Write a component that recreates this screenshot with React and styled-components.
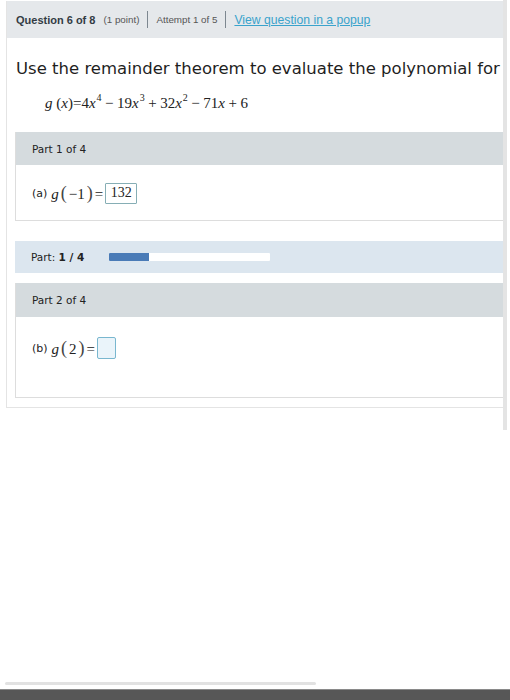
import React from 'react';
import styled, { createGlobalStyle } from 'styled-components';

const GlobalStyle = createGlobalStyle`
    html, body {
        margin: 0;
        padding: 0;
        background: #fff;
    }
`;

const Page = styled.div`
    width: 510px;
    height: 700px;
    display: flex;
    flex-direction: column;
    overflow: hidden;
    font-family: 'DejaVu Sans', Verdana, sans-serif;
    color: #222;
`;

const Main = styled.div`
    flex: 1;
    min-height: 0;
    display: flex;
`;

const Scroller = styled.div`
    flex: 1;
    min-width: 0;
    overflow: hidden;
    display: flex;
    flex-direction: column;
    justify-content: space-between;
    padding-top: 1px;
`;

const VTrack = styled.div`
    width: 4px;
    margin-right: 3px;
`;

const VThumb = styled.div`
    height: 430px;
    background: #e4e4e4;
`;

const HThumb = styled.div`
    width: 311px;
    height: 3px;
    margin: 0 0 4px 5px;
    border-radius: 2px;
    background: #e2e2e2;
`;

const Taskbar = styled.div`
    height: 10px;
    background: #575757;
    border-top: 1px solid #8a8a8a;
`;

const Card = styled.div`
    margin-left: 6px;
    border: 1px solid #e4e4e4;
    border-right: none;
    border-top: none;
`;

const Header = styled.div`
    height: 37px;
    background: #e5e8eb;
    display: flex;
    align-items: center;
    padding-left: 9px;
    font-family: 'Liberation Sans', Arial, sans-serif;
    color: #333c44;
    white-space: nowrap;
`;

const QTitle = styled.span`
    font-size: 11px;
    font-weight: bold;
`;

const Small = styled.span`
    font-size: 9.8px;
    color: #555;
    margin-left: ${(p) => p.$gap || 0}px;
`;

const Divider = styled.span`
    width: 1px;
    height: 17px;
    background: #7d8790;
    margin: 0 8px;
`;

const PopupLink = styled.a`
    font-size: 12.2px;
    color: #3aa3cc;
    text-decoration: underline;
    cursor: pointer;
`;

const Body = styled.div`
    padding: 0 0 9px 9px;
`;

const QuestionText = styled.p`
    margin: 21px 0 0;
    font-size: 16.5px;
    line-height: 20px;
    white-space: nowrap;
    color: #1f1f1f;
`;

const Formula = styled.div`
    margin: 14px 0 0 29px;
    line-height: 20px;
`;

const MathText = styled.span`
    font-family: 'Liberation Serif', 'Times New Roman', serif;
    font-size: ${(p) => p.$size || 14}px;
    color: #222;
    white-space: nowrap;
`;

const Var = styled.i`
    font-style: italic;
`;

const Sup = styled.sup`
    font-size: 10px;
    vertical-align: 7px;
    line-height: 0;
    margin-left: 1px;
`;

const Op = styled.span`
    margin: 0 3.5px;
`;

const Paren = styled.span`
    font-size: 18px;
    font-weight: 300;
    color: #444;
    margin: 0 2px;
`;

const PartBox = styled.div`
    margin: ${(p) => p.$top}px 0 0 -1px;
    border: 1px solid #dddddd;
    border-right: none;
    border-top: none;
`;

const PartHeader = styled.div`
    height: ${(p) => p.$h}px;
    background: #d5dbde;
    display: flex;
    align-items: center;
    padding-left: 16px;
    font-size: 10.5px;
    color: #222;
`;

const PartBody = styled.div`
    height: ${(p) => p.$h}px;
    padding: ${(p) => p.$pad}px 0 0 16px;
    box-sizing: border-box;
`;

const AnswerLine = styled.div`
    display: flex;
    align-items: center;
    height: 24px;
`;

const Label = styled.span`
    font-size: 11px;
    margin-right: 4px;
    color: #222;
`;

const AnswerBox = styled.span`
    display: inline-flex;
    align-items: center;
    justify-content: center;
    box-sizing: border-box;
    height: ${(p) => (p.$empty ? 22 : 21)}px;
    min-width: ${(p) => (p.$empty ? 19 : 32)}px;
    padding: 0 4px;
    margin-left: 2px;
    border: 1px solid ${(p) => (p.$empty ? '#79b7cf' : '#86aeb5')};
    border-radius: ${(p) => (p.$empty ? 2 : 1)}px;
    background: ${(p) => (p.$empty ? '#eaf4fa' : '#fff')};
    font-family: 'Liberation Serif', 'Times New Roman', serif;
    font-size: 14px;
    color: #222;
`;

const Progress = styled.div`
    margin: 20px 0 0 -1px;
    height: 32px;
    background: #dce6ef;
    display: flex;
    align-items: center;
    padding-left: 16px;
    font-size: 10.5px;
    color: #222;
`;

const ProgressLabel = styled.span`
    width: 78px;
    b {
        font-weight: bold;
    }
`;

const Bar = styled.div`
    width: 161px;
    height: 8px;
    background: #fff;
    border-radius: 1px;
    overflow: hidden;
`;

const BarFill = styled.div`
    height: 100%;
    background: #4a7bb7;
`;

const App = () => {
    const done = 1;
    const total = 4;
    return (
        <Page>
            <GlobalStyle />
            <Main>
                <Scroller>
                    <Card>
                        <Header>
                            <QTitle>Question 6 of 8</QTitle>
                            <Small $gap={8}>(1 point)</Small>
                            <Divider />
                            <Small>Attempt 1 of 5</Small>
                            <Divider />
                            <PopupLink>View question in a popup</PopupLink>
                        </Header>
                        <Body>
                            <QuestionText>Use the remainder theorem to evaluate the polynomial for</QuestionText>
                            <Formula>
                                <MathText $size={15}>
                                    <Var>g</Var> (<Var>x</Var>)=4<Var>x</Var>
                                    <Sup>4</Sup>
                                    <Op>−</Op>19<Var>x</Var>
                                    <Sup>3</Sup>
                                    <Op>+</Op>32<Var>x</Var>
                                    <Sup>2</Sup>
                                    <Op>−</Op>71<Var>x</Var>
                                    <Op>+</Op>6
                                </MathText>
                            </Formula>

                            <PartBox $top={19}>
                                <PartHeader $h={33}>Part 1 of 4</PartHeader>
                                <PartBody $h={55} $pad={16}>
                                    <AnswerLine>
                                        <Label>(a)</Label>
                                        <MathText $size={15}>
                                            <Var>g</Var>
                                            <Paren>(</Paren>−1<Paren>)</Paren>=
                                        </MathText>
                                        <AnswerBox>132</AnswerBox>
                                    </AnswerLine>
                                </PartBody>
                            </PartBox>

                            <Progress>
                                <ProgressLabel>
                                    Part: <b>{done} / {total}</b>
                                </ProgressLabel>
                                <Bar>
                                    <BarFill style={{ width: `${(done / total) * 100}%` }} />
                                </Bar>
                            </Progress>

                            <PartBox $top={10}>
                                <PartHeader $h={34}>Part 2 of 4</PartHeader>
                                <PartBody $h={80} $pad={19}>
                                    <AnswerLine>
                                        <Label>(b)</Label>
                                        <MathText $size={15}>
                                            <Var>g</Var>
                                            <Paren>(</Paren>2<Paren>)</Paren>=
                                        </MathText>
                                        <AnswerBox $empty />
                                    </AnswerLine>
                                </PartBody>
                            </PartBox>
                        </Body>
                    </Card>
                    <HThumb />
                </Scroller>
                <VTrack>
                    <VThumb />
                </VTrack>
            </Main>
            <Taskbar />
        </Page>
    );
};

export default App;
